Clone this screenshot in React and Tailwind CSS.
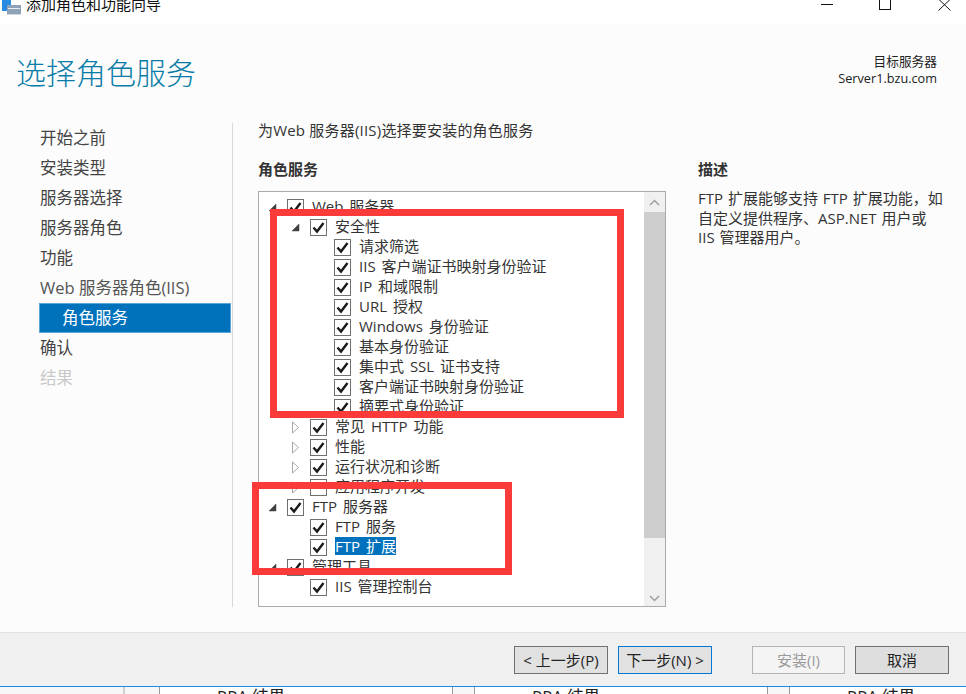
import React from 'react';

const FONT = "font-['Open_Sans','Noto_Sans_CJK_SC',sans-serif]";

const NAV = [
  { label: '开始之前', cls: 'text-[#444]' },
  { label: '安装类型', cls: 'text-[#444]' },
  { label: '服务器选择', cls: 'text-[#444]' },
  { label: '服务器角色', cls: 'text-[#444]' },
  { label: '功能', cls: 'text-[#444]' },
  { label: 'Web 服务器角色(IIS)', cls: 'text-[#555]' },
  { label: '角色服务', active: true },
  { label: '确认', cls: 'text-[#444]' },
  { label: '结果', cls: 'text-[#c8c8c8]' },
];

const TREE = [
  { label: 'Web 服务器', level: 0, arrow: 'open', checked: true },
  { label: '安全性', level: 1, arrow: 'open', checked: true },
  { label: '请求筛选', level: 2, checked: true },
  { label: 'IIS 客户端证书映射身份验证', level: 2, checked: true },
  { label: 'IP 和域限制', level: 2, checked: true },
  { label: 'URL 授权', level: 2, checked: true },
  { label: 'Windows 身份验证', level: 2, checked: true },
  { label: '基本身份验证', level: 2, checked: true },
  { label: '集中式 SSL 证书支持', level: 2, checked: true },
  { label: '客户端证书映射身份验证', level: 2, checked: true },
  { label: '摘要式身份验证', level: 2, checked: true },
  { label: '常见 HTTP 功能', level: 1, arrow: 'closed', checked: true },
  { label: '性能', level: 1, arrow: 'closed', checked: true },
  { label: '运行状况和诊断', level: 1, arrow: 'closed', checked: true },
  { label: '应用程序开发', level: 1, arrow: 'closed', checked: false },
  { label: 'FTP 服务器', level: 0, arrow: 'open', checked: true },
  { label: 'FTP 服务', level: 1, checked: true },
  { label: 'FTP 扩展', level: 1, checked: true, selected: true },
  { label: '管理工具', level: 0, arrow: 'open', checked: true },
  { label: 'IIS 管理控制台', level: 1, checked: true },
];

const Arrow = ({ type }) => {
  if (type === 'open') {
    return (
      <svg width="9" height="9" viewBox="0 0 9 9" className="shrink-0">
        <path d="M8 1V8H1Z" fill="#404040" stroke="#404040" strokeWidth="0.5" />
      </svg>
    );
  }
  if (type === 'closed') {
    return (
      <svg width="9" height="13" viewBox="0 0 9 13" className="shrink-0">
        <path d="M1.5 1V12L7.5 6.5Z" fill="#fff" stroke="#a6a6a6" />
      </svg>
    );
  }
  return <span className="w-[9px] shrink-0" />;
};

const Checkbox = ({ checked }) => (
  <span className="w-[17px] h-[17px] border border-[#707070] bg-white flex items-center justify-center shrink-0">
    {checked && (
      <svg width="13" height="13" viewBox="0 0 13 13">
        <path d="M1.5 6.5L5 10.5L11.5 2" fill="none" stroke="#1a1a1a" strokeWidth="2.4" />
      </svg>
    )}
  </span>
);

const TreeRow = ({ label, level, arrow, checked, selected }) => {
  const indent = ['pl-[9px]', 'pl-[32px]', 'pl-[56px]'][level];
  return (
    <div className={`h-5 flex items-center ${indent}`}>
      <Arrow type={arrow} />
      <span className="w-[10px] shrink-0" />
      <Checkbox checked={checked} />
      <span
        className={`ml-[8px] -mt-[2px] h-[18px] leading-[18px] text-[15px] [word-spacing:2px] whitespace-nowrap ${
          selected ? 'bg-[#0071bc] text-white' : 'text-[#333]'
        }`}
      >
        {label}
      </span>
    </div>
  );
};

const Button = ({ children, cls }) => (
  <div className={`h-[28px] flex items-center justify-center border text-[15px] ${cls}`}>{children}</div>
);

export default function App() {
  return (
    <div className={`w-[966px] h-[694px] overflow-hidden relative flex flex-col bg-white ${FONT}`}>
      {/* Title bar, cut off at the top */}
      <div className="h-6 shrink-0 bg-white relative flex items-start overflow-hidden">
        <svg width="20" height="16" viewBox="0 0 20 16" className="ml-[1px] shrink-0">
          <rect x="1" y="0" width="9" height="11" fill="#2a8ce0" />
          <rect x="6" y="5" width="14" height="10" fill="#8fa3b8" />
          <rect x="7" y="8" width="12" height="1" fill="#e8eef3" />
          <rect x="6" y="14" width="14" height="1" fill="#cfd8e0" />
        </svg>
        <span className="ml-[5px] -mt-[6px] text-[15px] leading-5 text-[#111] whitespace-nowrap">添加角色和功能向导</span>
        <div className="absolute right-0 top-0 h-6 w-[150px]">
          <span className="absolute left-[5px] top-[4px] w-3 h-px bg-[#111]" />
          <span className="absolute left-[63px] -top-px w-3 h-[11px] border border-[#111]" />
          <svg width="13" height="12" viewBox="0 0 13 12" className="absolute left-[122px] top-0">
            <path d="M0.5 -1L12.5 10.5M12.5 -1L0.5 10.5" stroke="#111" fill="none" />
          </svg>
        </div>
      </div>

      {/* Wizard body */}
      <div className="flex-1 min-h-0 bg-[#fcfcfc] flex flex-col">
        <div className="h-[83px] shrink-0 flex justify-between pl-[16px] pr-[29px]">
          <h1 className="mt-[28px] text-[30px] leading-[42px] font-light text-[#0a7ca8] whitespace-nowrap">选择角色服务</h1>
          <div className="mt-[29px] text-right text-[12.7px] leading-[17px] text-[#222]">
            <div>目标服务器</div>
            <div>Server1.bzu.com</div>
          </div>
        </div>

        <div className="flex flex-1 min-h-0">
          {/* Step list */}
          <nav className="w-[233px] shrink-0 mt-[16px] h-[484px] border-r border-[#d9d9d9] flex flex-col">
            {NAV.map((item) =>
              item.active ? (
                <div
                  key={item.label}
                  className="ml-[39px] mr-px h-[30px] flex items-center pl-[22px] bg-[#0072bc] border border-[#5aa5d8] text-white text-[16.5px]"
                >
                  {item.label}
                </div>
              ) : (
                <div key={item.label} className={`ml-[40px] h-[30px] flex items-center text-[16.5px] whitespace-nowrap ${item.cls}`}>
                  {item.label}
                </div>
              )
            )}
          </nav>

          {/* Main column */}
          <div className="flex-1 min-w-0 pl-[25px] flex flex-col">
            <div className="mt-[13px] h-5 leading-5 text-[15px] tracking-[0.2px] text-[#333] whitespace-nowrap">为Web 服务器(IIS)选择要安装的角色服务</div>
            <div className="flex mt-[19px]">
              <div className="w-[408px] shrink-0">
                <div className="h-5 leading-5 text-[15px] font-bold text-[#333]">角色服务</div>
                <div className="mt-[12px] h-[416px] border border-[#ababab] bg-white flex overflow-hidden">
                  <div className="flex-1 min-w-0 pt-[5px] overflow-hidden">
                    {TREE.map((row) => (
                      <TreeRow key={row.label} {...row} />
                    ))}
                  </div>
                  <div className="w-[21px] shrink-0 bg-[#f0f0f0] flex flex-col">
                    <div className="h-[20px] shrink-0 flex items-center justify-center">
                      <svg width="11" height="7" viewBox="0 0 11 7">
                        <path d="M1 6L5.5 1.5L10 6" fill="none" stroke="#a0a0a0" strokeWidth="1.5" />
                      </svg>
                    </div>
                    <div className="h-[326px] shrink-0 bg-[#cdcdcd]" />
                    <div className="flex-1" />
                    <div className="h-[16px] shrink-0 flex items-center justify-center">
                      <svg width="11" height="7" viewBox="0 0 11 7">
                        <path d="M1 1L5.5 5.5L10 1" fill="none" stroke="#a0a0a0" strokeWidth="1.5" />
                      </svg>
                    </div>
                  </div>
                </div>
              </div>
              <div className="ml-[32px] w-[260px]">
                <div className="h-5 leading-5 text-[15px] font-bold text-[#333]">描述</div>
                <div className="mt-[10px] text-[15px] leading-[19.5px] [word-spacing:1px] text-[#333] whitespace-nowrap">
                  FTP 扩展能够支持 FTP 扩展功能，如<br />自定义提供程序、ASP.NET 用户或<br />IIS 管理器用户。
                </div>
              </div>
            </div>
          </div>
        </div>
      </div>

      {/* Button bar */}
      <div className="h-[54px] shrink-0 bg-[#f0f0f0] border-t border-[#e0e0e0] flex justify-end pt-[13px] pr-[17px]">
        <Button cls="w-[94px] bg-[#e1e1e1] border-[#707070] text-[#222]">&lt; 上一步(P)</Button>
        <Button cls="ml-[10px] w-[94px] bg-[#e1e1e1] border-[#0078d7] text-[#222]">下一步(N) &gt;</Button>
        <Button cls="ml-[40px] w-[93px] bg-[#f4f4f4] border-[#b5b5b5] text-[#9a9a9a]">安装(I)</Button>
        <Button cls="ml-[10px] w-[94px] bg-[#dedede] border-[#707070] text-[#222]">取消</Button>
      </div>

      {/* Window behind, only its top edge shows */}
      <div className="h-[8px] shrink-0 border-t border-[#1e88e5] bg-white flex overflow-hidden text-[16.5px] leading-5 text-[#222]">
        <div className="w-[125px] shrink-0 bg-[#f7f7f7] border-r-2 border-[#d0d0d0]" />
        <div className="w-[35px] shrink-0 bg-[#f7f7f7] border-r border-[#999]" />
        <div className="w-[293px] shrink-0 border-r border-[#999] pl-[57px] whitespace-nowrap">RRA 结果</div>
        <div className="w-[22px] shrink-0 bg-[#f7f7f7] border-r border-[#999]" />
        <div className="w-[293px] shrink-0 border-r border-[#999] pl-[57px] whitespace-nowrap">RRA 结果</div>
        <div className="w-[22px] shrink-0 bg-[#f7f7f7] border-r border-[#999]" />
        <div className="flex-1 pl-[57px] whitespace-nowrap">RRA 结果</div>
      </div>

      {/* Red annotation frames drawn over the shot */}
      <div className="absolute left-[270px] top-[209px] w-[354px] h-[209px] border-[7px] border-[#fb3a3a]" />
      <div className="absolute left-[252px] top-[482px] w-[260px] h-[93px] border-[7px] border-[#fb3a3a]" />
    </div>
  );
}
